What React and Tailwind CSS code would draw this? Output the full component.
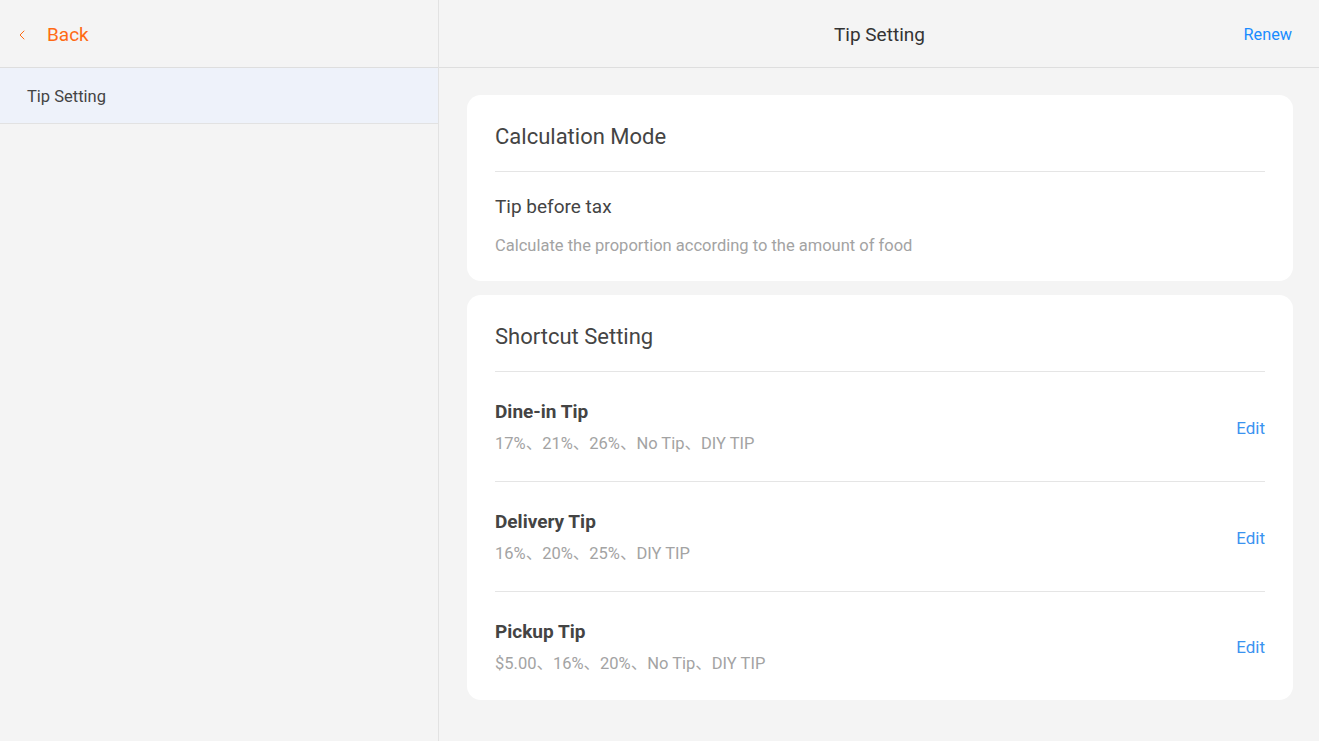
import { ChevronLeft } from "lucide-react";

const shortcuts = [
  { title: "Dine-in Tip", values: "17%、21%、26%、No Tip、DIY TIP" },
  { title: "Delivery Tip", values: "16%、20%、25%、DIY TIP" },
  { title: "Pickup Tip", values: "$5.00、16%、20%、No Tip、DIY TIP" },
];

function Sidebar() {
  return (
    <div className="w-[439px] shrink-0 border-r border-[#e2e2e2] flex flex-col">
      <div className="h-[68px] flex items-center pl-[14px] pt-[3px] border-b border-[#dedede]">
        <ChevronLeft className="w-[16px] h-[16px] text-[#ff6a13]" strokeWidth={1.5} />
        <span className="ml-[17px] text-[19px] text-[#ff6a13]">Back</span>
      </div>
      <div className="h-[56px] flex items-center pl-[27px] pt-[4px] bg-[#eef2fa] border-b border-[#e2e2e2]">
        <span className="text-[16.5px] text-[#444]">Tip Setting</span>
      </div>
    </div>
  );
}

function Card({ title, children }) {
  return (
    <div className="bg-white rounded-[14px] px-[28px]">
      <div className="h-[77px] flex items-center border-b border-[#e5e5e5] pt-[8px]">
        <h2 className="text-[22px] leading-[26px] text-[#444]">{title}</h2>
      </div>
      {children}
    </div>
  );
}

export default function App() {
  return (
    <div
      className="w-[1319px] h-[741px] flex bg-[#f4f4f4] overflow-hidden"
      style={{ fontFamily: "Roboto, 'Noto Sans CJK SC', sans-serif" }}
    >
      <Sidebar />
      <div className="flex-1 flex flex-col">
        <div className="h-[68px] shrink-0 flex items-center justify-between border-b border-[#dedede] pt-[3px] pl-[395px] pr-[27px]">
          <span className="text-[19px] text-[#333]">Tip Setting</span>
          <span className="text-[16.3px] text-[#1a8cff]">Renew</span>
        </div>
        <div className="flex flex-col gap-[14px] pl-[28px] pt-[27px] pr-[26px]">
          <Card title="Calculation Mode">
            <div className="h-[109px] flex flex-col pt-[24px]">
              <span className="text-[19px] leading-[22px] text-[#444]">Tip before tax</span>
              <span className="mt-[18px] text-[16.5px] leading-[20px] text-[#a3a3a3]">
                Calculate the proportion according to the amount of food
              </span>
            </div>
          </Card>
          <Card title="Shortcut Setting">
            {shortcuts.map((s, i) => (
              <div
                key={s.title}
                className={
                  "flex items-center justify-between pt-[2px] " +
                  (i < shortcuts.length - 1 ? "h-[110px] border-b border-[#e5e5e5]" : "h-[108px]")
                }
              >
                <div className="flex flex-col">
                  <span className="text-[19px] leading-[22px] font-bold text-[#444]">{s.title}</span>
                  <span className="mt-[11px] text-[16.5px] leading-[20px] text-[#a3a3a3]">{s.values}</span>
                </div>
                <span className="text-[17px] leading-[20px] text-[#3a93f0]">Edit</span>
              </div>
            ))}
          </Card>
        </div>
      </div>
    </div>
  );
}
